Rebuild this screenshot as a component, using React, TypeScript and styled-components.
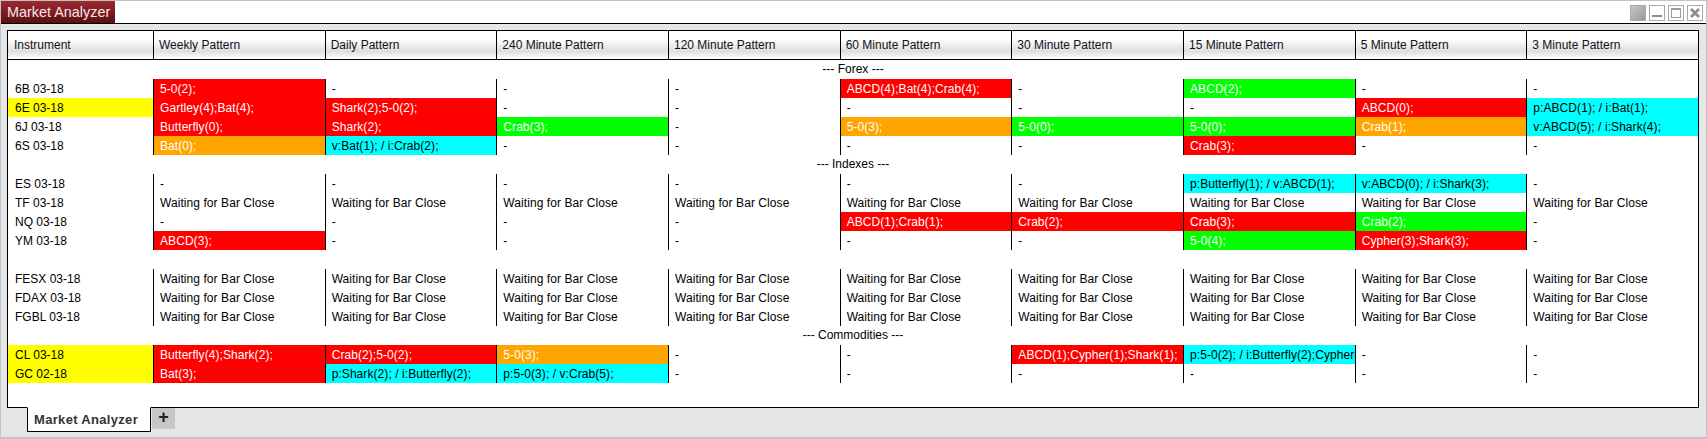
import React from 'react';
import styled, { createGlobalStyle } from 'styled-components';

const GlobalStyle = createGlobalStyle`
  html, body {
    margin: 0;
    padding: 0;
    background-color: #ffffff;
  }
`;

const Window = styled.div`
  display: flex;
  flex-direction: column;
  width: 1707px;
  height: 439px;
  box-sizing: border-box;
  overflow: hidden;
  background-color: #e5e6e8;
  border: 1px solid #c4c4c4;
  border-bottom-width: 2px;
  font-family: "Liberation Sans", Arial, sans-serif;
`;

const TitleBar = styled.div`
  display: flex;
  justify-content: space-between;
  flex-shrink: 0;
  height: 22px;
  background-color: #ffffff;
  border-bottom: 1px solid #000000;
`;

const TitleTab = styled.div`
  width: 114px;
  height: 22px;
  box-sizing: border-box;
  padding-left: 6px;
  line-height: 23px;
  font-size: 14.4px;
  color: #f4e8e8;
  white-space: nowrap;
  background: linear-gradient(#9a2a30, #7d1a20 55%, #5a0f14);
`;

const WindowButtons = styled.div`
  display: flex;
  gap: 3px;
  padding: 4px 3px 0 0;
`;

const WindowButton = styled.div<{ $filled?: boolean }>`
  width: 14px;
  height: 14px;
  border: 1px solid #a8a8a8;
  background: ${(p) => (p.$filled ? 'linear-gradient(135deg, #c8c8c8, #989898)' : '#ffffff')};
  svg {
    display: block;
  }
`;

const Content = styled.div`
  flex-shrink: 0;
  padding: 6px 7px 0 6px;
`;

const Grid = styled.div`
  height: 378px;
  box-sizing: border-box;
  border: 1px solid #000000;
  background-color: #ffffff;
  font-size: 12px;
  color: #000000;
`;

const Row = styled.div`
  display: grid;
  grid-template-columns: 145px repeat(9, 1fr);
  height: 19px;
`;

const HeaderRow = styled(Row)`
  height: 28px;
  border-bottom: 1px solid #000000;
  background: linear-gradient(#ffffff 30%, #dedede 72%, #ffffff);
`;

const HeaderCell = styled.div<{ $first?: boolean }>`
  box-sizing: border-box;
  padding-left: ${(p) => (p.$first ? '6px' : '5px')};
  line-height: 28px;
  color: #101020;
  border-left: ${(p) => (p.$first ? 'none' : '1px solid #000000')};
  white-space: nowrap;
`;

const GroupRow = styled.div`
  height: 19px;
  line-height: 18px;
  text-align: center;
`;

const Cell = styled.div<{ $bg?: string; $fg?: string; $first?: boolean }>`
  box-sizing: border-box;
  min-width: 0;
  overflow: hidden;
  padding-left: ${(p) => (p.$first ? '7px' : '6px')};
  line-height: 20px;
  letter-spacing: ${(p) => (p.$first ? '0' : '0.07px')};
  white-space: nowrap;
  color: ${(p) => p.$fg ?? '#000000'};
  background-color: ${(p) => p.$bg ?? 'transparent'};
  border-left: ${(p) => (p.$first ? 'none' : '1px solid #000000')};
`;

const TabBar = styled.div`
  display: flex;
  flex: 1;
  padding-left: 26px;
`;

const Tab = styled.div`
  width: 124px;
  height: 25px;
  box-sizing: border-box;
  margin-top: -1px;
  padding-left: 6px;
  line-height: 23px;
  font-size: 13px;
  font-weight: bold;
  letter-spacing: 0.32px;
  color: #333333;
  background-color: #ffffff;
  border: 1px solid #000000;
  border-top-color: #ffffff;
`;

const AddTab = styled.div`
  width: 23px;
  height: 21px;
  margin-left: 1px;
  text-align: center;
  line-height: 19px;
  font-size: 18px;
  font-weight: bold;
  color: #222222;
  background-color: #c6c6c6;
`;

const RED = '#ff0000';
const GREEN = '#00ff00';
const ORANGE = '#ffa500';
const CYAN = '#00ffff';
const WAIT = 'Waiting for Bar Close';

type Pattern = string | [string, string];

const columns = ['Weekly', 'Daily', '240 Minute', '120 Minute', '60 Minute', '30 Minute', '15 Minute', '5 Minute', '3 Minute'];

const allWaiting: Pattern[] = Array(9).fill(WAIT);

type Line =
  | { kind: 'group'; label: string }
  | { kind: 'blank' }
  | { kind: 'row'; name: string; marked?: boolean; cells: Pattern[] };

const lines: Line[] = [
  { kind: 'group', label: '--- Forex ---' },
  { kind: 'row', name: '6B 03-18', cells: [['5-0(2);', RED], '-', '-', '-', ['ABCD(4);Bat(4);Crab(4);', RED], '-', ['ABCD(2);', GREEN], '-', '-'] },
  { kind: 'row', name: '6E 03-18', marked: true, cells: [['Gartley(4);Bat(4);', RED], ['Shark(2);5-0(2);', RED], '-', '-', '-', '-', '-', ['ABCD(0);', RED], ['p:ABCD(1); / i:Bat(1);', CYAN]] },
  { kind: 'row', name: '6J 03-18', cells: [['Butterfly(0);', RED], ['Shark(2);', RED], ['Crab(3);', GREEN], '-', ['5-0(3);', ORANGE], ['5-0(0);', GREEN], ['5-0(0);', GREEN], ['Crab(1);', ORANGE], ['v:ABCD(5); / i:Shark(4);', CYAN]] },
  { kind: 'row', name: '6S 03-18', cells: [['Bat(0);', ORANGE], ['v:Bat(1); / i:Crab(2);', CYAN], '-', '-', '-', '-', ['Crab(3);', RED], '-', '-'] },
  { kind: 'group', label: '--- Indexes ---' },
  { kind: 'row', name: 'ES 03-18', cells: ['-', '-', '-', '-', '-', '-', ['p:Butterfly(1); / v:ABCD(1);', CYAN], ['v:ABCD(0); / i:Shark(3);', CYAN], '-'] },
  { kind: 'row', name: 'TF 03-18', cells: allWaiting },
  { kind: 'row', name: 'NQ 03-18', cells: ['-', '-', '-', '-', ['ABCD(1);Crab(1);', RED], ['Crab(2);', RED], ['Crab(3);', RED], ['Crab(2);', GREEN], '-'] },
  { kind: 'row', name: 'YM 03-18', cells: [['ABCD(3);', RED], '-', '-', '-', '-', '-', ['5-0(4);', GREEN], ['Cypher(3);Shark(3);', RED], '-'] },
  { kind: 'blank' },
  { kind: 'row', name: 'FESX 03-18', cells: allWaiting },
  { kind: 'row', name: 'FDAX 03-18', cells: allWaiting },
  { kind: 'row', name: 'FGBL 03-18', cells: allWaiting },
  { kind: 'group', label: '--- Commodities ---' },
  { kind: 'row', name: 'CL 03-18', marked: true, cells: [['Butterfly(4);Shark(2);', RED], ['Crab(2);5-0(2);', RED], ['5-0(3);', ORANGE], '-', '-', ['ABCD(1);Cypher(1);Shark(1);', RED], ['p:5-0(2); / i:Butterfly(2);Cypher(', CYAN], '-', '-'] },
  { kind: 'row', name: 'GC 02-18', marked: true, cells: [['Bat(3);', RED], ['p:Shark(2); / i:Butterfly(2);', CYAN], ['p:5-0(3); / v:Crab(5);', CYAN], '-', '-', '-', '-', '-', '-'] },
];

const renderCell = (cell: Pattern, i: number) => {
  if (typeof cell === 'string') return <Cell key={i}>{cell}</Cell>;
  const [text, bg] = cell;
  return (
    <Cell key={i} $bg={bg} $fg={bg === CYAN ? '#000000' : '#ffffff'}>
      {text}
    </Cell>
  );
};

const App: React.FC = () => (
  <Window>
    <GlobalStyle />
    <TitleBar>
      <TitleTab>Market Analyzer</TitleTab>
      <WindowButtons>
        <WindowButton $filled />
        <WindowButton>
          <svg width="14" height="14" viewBox="0 0 14 14">
            <rect x="2" y="9" width="10" height="2" fill="#8c8c8c" />
          </svg>
        </WindowButton>
        <WindowButton>
          <svg width="14" height="14" viewBox="0 0 14 14">
            <rect x="2.5" y="2.5" width="9" height="9" fill="none" stroke="#9a9a9a" />
            <rect x="2" y="2" width="10" height="2" fill="#9a9a9a" />
          </svg>
        </WindowButton>
        <WindowButton>
          <svg width="14" height="14" viewBox="0 0 14 14">
            <path d="M3 3 L11 11 M11 3 L3 11" stroke="#8c8c8c" strokeWidth="2.6" />
          </svg>
        </WindowButton>
      </WindowButtons>
    </TitleBar>
    <Content>
      <Grid>
        <HeaderRow>
          <HeaderCell $first>Instrument</HeaderCell>
          {columns.map((c) => (
            <HeaderCell key={c}>{c} Pattern</HeaderCell>
          ))}
        </HeaderRow>
        {lines.map((line, i) => {
          if (line.kind === 'group') return <GroupRow key={i}>{line.label}</GroupRow>;
          if (line.kind === 'blank') return <GroupRow key={i} />;
          return (
            <Row key={i}>
              <Cell $first $bg={line.marked ? '#ffff00' : undefined}>
                {line.name}
              </Cell>
              {line.cells.map(renderCell)}
            </Row>
          );
        })}
      </Grid>
    </Content>
    <TabBar>
      <Tab>Market Analyzer</Tab>
      <AddTab>+</AddTab>
    </TabBar>
  </Window>
);

export default App;
